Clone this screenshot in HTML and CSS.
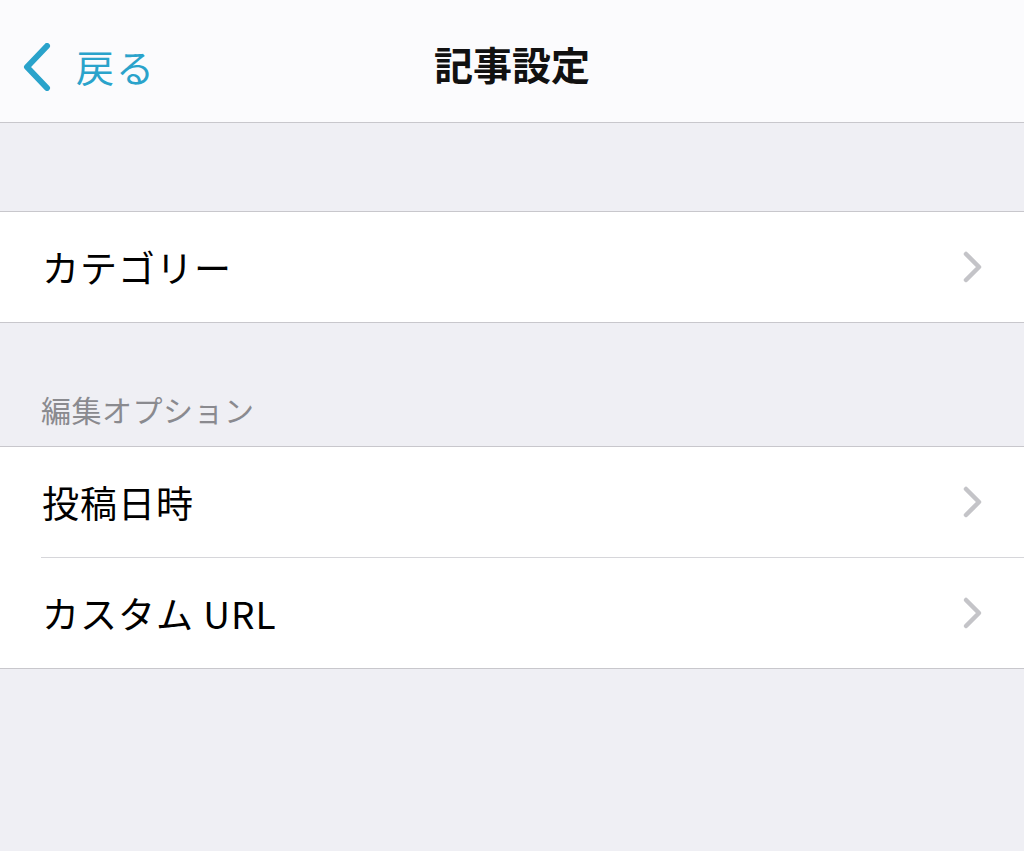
FILE: index.html
```html
<!DOCTYPE html>
<html lang="ja">
<head>
<meta charset="utf-8">
<link rel="stylesheet" href="styles.css">
</head>
<body>
<header class="nav">
  <div class="back">
    <svg class="back-chev" width="30" height="48" viewBox="0 0 30 48"><path d="M25 3 L5 24 L25 45" fill="none" stroke="#2aa3cb" stroke-width="6" stroke-linecap="round" stroke-linejoin="round"/></svg>
    <span class="back-label">戻る</span>
  </div>
  <h1 class="title">記事設定</h1>
</header>
<div class="spacer"></div>
<section class="group">
  <div class="row"><span class="label">カテゴリー</span><svg class="chev" width="22" height="34" viewBox="0 0 22 34"><path d="M4 4 L17 17 L4 30" fill="none" stroke="#c4c4c8" stroke-width="4.5" stroke-linecap="round" stroke-linejoin="round"/></svg></div>
</section>
<div class="section-head">編集オプション</div>
<section class="group">
  <div class="row"><span class="label">投稿日時</span><svg class="chev" width="22" height="34" viewBox="0 0 22 34"><path d="M4 4 L17 17 L4 30" fill="none" stroke="#c4c4c8" stroke-width="4.5" stroke-linecap="round" stroke-linejoin="round"/></svg></div>
  <div class="sep"></div>
  <div class="row"><span class="label">カスタム URL</span><svg class="chev" width="22" height="34" viewBox="0 0 22 34"><path d="M4 4 L17 17 L4 30" fill="none" stroke="#c4c4c8" stroke-width="4.5" stroke-linecap="round" stroke-linejoin="round"/></svg></div>
</section>
</body>
</html>
```
FILE: styles.css
```css
html, body {
  margin: 0;
  padding: 0;
  background: #efeff4;
  font-family: "Noto Sans CJK JP", "Noto Sans", sans-serif;
}
.nav {
  height: 122px;
  background: #fbfbfd;
  border-bottom: 1px solid #c8c7cc;
  display: flex;
  align-items: center;
  justify-content: center;
  position: relative;
}
.back {
  position: absolute;
  left: 22px;
  top: 43px;
  display: flex;
  align-items: center;
  gap: 24px;
}
.back-chev { display: block; }
.back-label {
  color: #2aa3cb;
  font-size: 38px;
  letter-spacing: 2px;
  line-height: 48px;
  margin-top: -2px;
}
.title {
  margin: 0;
  font-size: 39px;
  font-weight: 700;
  color: #111;
  line-height: 1;
  margin-top: 4px;
}
.spacer { height: 88px; }
.group {
  background: #fff;
  border-top: 1px solid #c8c7cc;
  border-bottom: 1px solid #c8c7cc;
}
.row {
  height: 110px;
  display: flex;
  align-items: center;
  justify-content: space-between;
  padding: 0 40px 0 42px;
}
.label {
  font-size: 37px;
  letter-spacing: 1px;
  color: #000;
  line-height: 1;
}
.chev { display: block; }
.sep {
  height: 1px;
  background: #d6d6da;
  margin-left: 41px;
}
.section-head {
  height: 123px;
  box-sizing: border-box;
  padding: 0 0 22px 41px;
  display: flex;
  align-items: flex-end;
  font-size: 30px;
  letter-spacing: 0.5px;
  color: #8a8a8f;
  line-height: 1;
}
```
